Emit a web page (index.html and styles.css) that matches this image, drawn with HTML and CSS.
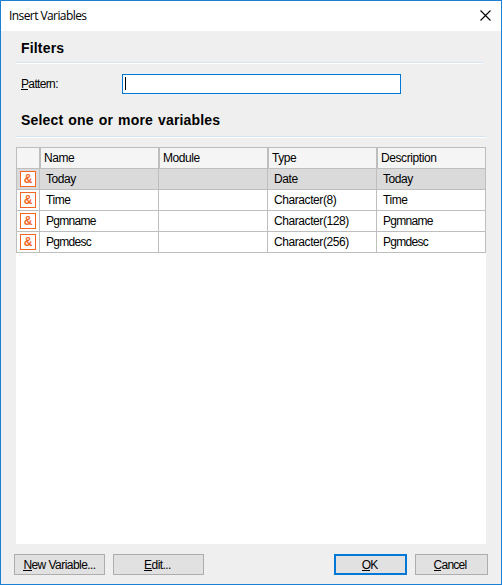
FILE: index.html
```html
<!DOCTYPE html>
<html lang="en">
<head>
<meta charset="utf-8">
<title>Insert Variables</title>
<link rel="stylesheet" href="styles.css">
</head>
<body>
<div class="dialog">
  <header class="titlebar">
    <span class="title">Insert Variables</span>
    <svg class="close" width="11" height="11" viewBox="0 0 11 11"><path d="M.5 .5l10 10M10.5 .5l-10 10"/></svg>
  </header>
  <main class="content">
    <h2 class="heading filters">Filters</h2>
    <div class="pattern-row">
      <label class="label"><u>P</u>attern:</label>
      <div class="input"><span class="caret"></span></div>
    </div>
    <h2 class="heading select">Select one or more variables</h2>
    <div class="list">
      <div class="row head"><span></span><span>Name</span><span>Module</span><span>Type</span><span>Description</span></div>
      <div class="row selected"><span><i class="icon">&amp;</i></span><span>Today</span><span></span><span>Date</span><span>Today</span></div>
      <div class="row"><span><i class="icon">&amp;</i></span><span>Time</span><span></span><span>Character(8)</span><span>Time</span></div>
      <div class="row"><span><i class="icon">&amp;</i></span><span class="tight">Pgmname</span><span></span><span>Character(128)</span><span class="tight">Pgmname</span></div>
      <div class="row"><span><i class="icon">&amp;</i></span><span class="tight">Pgmdesc</span><span></span><span>Character(256)</span><span class="tight">Pgmdesc</span></div>
    </div>
  </main>
  <footer class="buttons">
    <button class="btn wide"><u>N</u>ew Variable...</button>
    <button class="btn wide edit"><u>E</u>dit...</button>
    <button class="btn ok"><u>O</u>K</button>
    <button class="btn cancel"><u>C</u>ancel</button>
  </footer>
</div>
</body>
</html>
```
FILE: styles.css
```css
* { box-sizing: border-box; }
body {
  margin: 0;
  background: #fff;
  color: #000;
  font: 12px/14px "Liberation Sans", Arial, sans-serif;
  letter-spacing: -0.42px;
}
.dialog {
  width: 502px;
  height: 585px;
  border: 1px solid #1a80d6;
  background: #efefef;
  display: flex;
  flex-direction: column;
}
.titlebar {
  height: 30px;
  background: #fff;
  display: flex;
  justify-content: space-between;
  padding: 0 10px 0 8px;
}
.title {
  font: 12px/30px "Open Sans", sans-serif;
  letter-spacing: -0.58px;
}
.close { margin-top: 9px; }
.close path { stroke: #000; stroke-width: 1.1; fill: none; }
.content { padding: 0 15px; flex: 1; }
.heading {
  margin: 0;
  padding-left: 5px;
  font-size: 14px;
  font-weight: bold;
  letter-spacing: 0.18px;
  word-spacing: 0.9px;
  border-bottom: 1px solid #d5e4f2;
  box-shadow: 0 1px #fff;
}
.filters { width: 467px; height: 32px; line-height: 34px; }
.pattern-row { display: flex; padding-left: 5px; height: 31px; margin-top: 11px; }
.label { width: 101px; line-height: 21px; letter-spacing: -0.65px; }
u { text-decoration: none; display: inline-block; height: 13px; line-height: 14px; border-bottom: 1px solid #000; }
.input {
  width: 279px;
  height: 20px;
  border: 1px solid #0078d7;
  background: #fff;
  padding: 2px;
}
.caret { display: block; width: 1px; height: 13px; background: #000; }
.select { width: 470px; height: 32px; line-height: 31px; }
.list { width: 470px; height: 397px; margin-top: 10px; background: #fff; border-top: 1px solid #bebebe; }
.row {
  display: grid;
  grid-template-columns: 24px 119px 109px 109px 109px;
  height: 21px;
  border-bottom: 1px solid #bebebe;
}
.row > span { border-right: 1px solid #bebebe; padding-left: 6px; line-height: 20px; white-space: nowrap; }
.row > span:first-child { border-left: 1px solid #bebebe; padding: 2px 0 0 3px; }
.row > .tight { letter-spacing: -0.7px; }
.head > span { background: #f5f5f5; padding-left: 3px; border-left: 1px solid #bebebe; }
.selected { background: #dadada; }
.icon {
  display: block;
  width: 16px;
  height: 16px;
  border: 1px solid #f26522;
  background: #fff;
  color: #f26522;
  font: bold 12px/15px "Liberation Sans", Arial, sans-serif;
  letter-spacing: 0;
  text-align: center;
}
.buttons { display: flex; gap: 8px; height: 30px; padding: 0 13px; }
.btn {
  width: 73px;
  height: 21px;
  padding: 0;
  border: 1px solid #adadad;
  background: #e1e1e1;
  color: #000;
  font: inherit;
  letter-spacing: -0.55px;
}
.wide { width: 91px; }
.edit { padding-right: 2px; }
.cancel { padding-right: 3px; letter-spacing: -0.75px; }
.ok { margin-left: auto; padding-right: 2px; letter-spacing: -1px; border: 2px solid #0078d7; }
```
